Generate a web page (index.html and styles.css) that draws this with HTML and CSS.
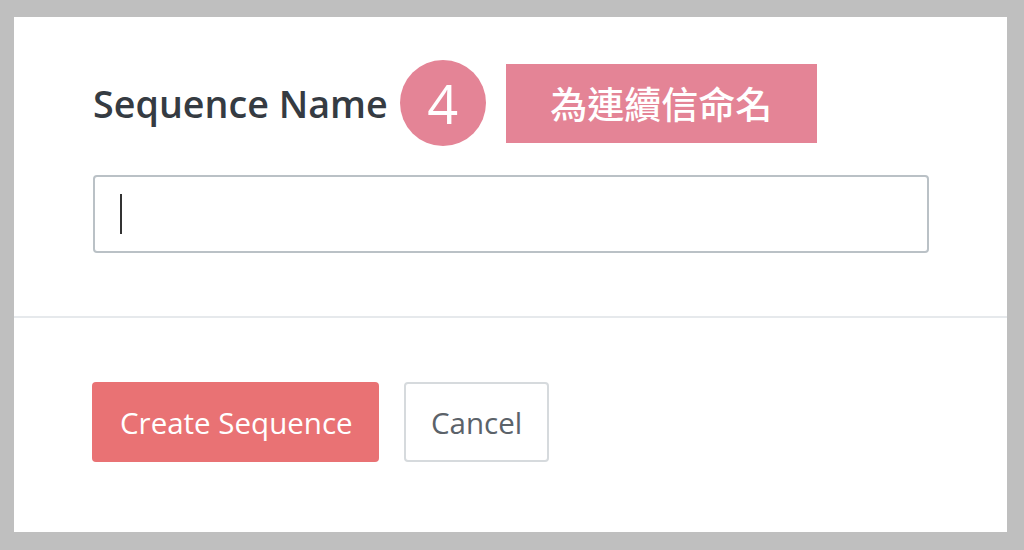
FILE: index.html
```html
<!DOCTYPE html>
<html lang="en">
<head>
  <meta charset="UTF-8">
  <meta name="viewport" content="width=device-width, initial-scale=1.0">
  <title>New Sequence</title>
  <link rel="stylesheet" href="styles.css">
</head>
<body>
  <div class="panel">
    <div class="panel-body">
      <div class="field-head">
        <label class="field-label" for="seqName">Sequence Name</label>
        <span class="step">4</span>
        <span class="note">為連續信命名</span>
      </div>
      <div class="text-input" id="seqName">
        <span class="caret"></span>
      </div>
    </div>
    <div class="panel-footer">
      <button class="btn btn-primary">Create Sequence</button>
      <button class="btn btn-default">Cancel</button>
    </div>
  </div>
</body>
</html>
```

FILE: styles.css
```css
body {
  margin: 0;
  padding: 17px 17px 18px 14px;
  background-color: #bfbfbf;
  font-family: "Open Sans", Arial, sans-serif;
}
.panel {
  background: white;
  height: 515px;
  box-sizing: border-box;
}
.panel-body {
  padding: 43px 78px 0 79px;
  height: 301px;
  box-sizing: border-box;
  border-bottom: 2px solid #e6e9ec;
}
.field-head {
  display: flex;
  align-items: center;
  height: 86px;
  margin-bottom: 29px;
}
.field-label {
  font-size: 37.7px;
  font-weight: 600;
  color: #353b42;
  margin-right: 12px;
}
.step {
  width: 86px;
  height: 86px;
  border-radius: 50%;
  background-color: #e48496;
  color: white;
  font-size: 54px;
  font-weight: 500;
  display: flex;
  align-items: center;
  justify-content: center;
  margin-right: 20px;
}
.note {
  width: 311px;
  height: 79px;
  background-color: #e48496;
  color: white;
  font-family: "Noto Sans CJK TC", sans-serif;
  font-size: 37px;
  font-weight: 500;
  display: flex;
  align-items: center;
  justify-content: center;
}
.text-input {
  height: 78px;
  border: 2px solid #bac1c6;
  border-radius: 4px;
  box-sizing: border-box;
  display: flex;
  align-items: center;
  padding-left: 25px;
}
.caret {
  width: 2px;
  height: 40px;
  background-color: #333;
}
.panel-footer {
  padding: 64px 78px 0;
  display: flex;
  gap: 25px;
}
.btn {
  height: 80px;
  font-family: "Open Sans", Arial, sans-serif;
  font-size: 29.5px;
  border-radius: 4px;
  text-align: left;
  cursor: pointer;
}
.btn-primary {
  background-color: #e97274;
  color: white;
  border: none;
  width: 287px;
  padding: 0 0 0 28px;
}
.btn-default {
  background-color: white;
  color: #5b6269;
  border: 2px solid #d6dadd;
  width: 145px;
  padding: 0 0 0 25px;
}
```
